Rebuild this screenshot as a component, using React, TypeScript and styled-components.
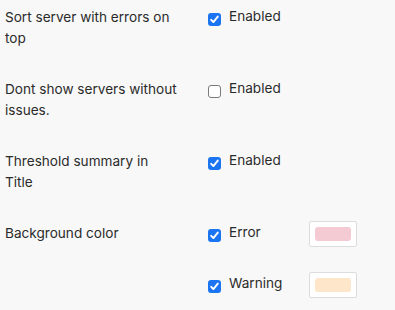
import React from 'react'
import styled, { createGlobalStyle } from 'styled-components'

const GlobalStyle = createGlobalStyle`
  html, body {
    margin: 0;
    padding: 0;
    background: #f8f8f8;
  }
  body {
    font-family: Inter, "Liberation Sans", sans-serif;
    font-size: 13.6px;
    color: #2b2b2b;
  }
`

interface Option {
  label: string
  checked: boolean
  color?: string
}

interface Setting {
  title: string
  options: Option[]
}

const settings: Setting[] = [
  { title: 'Sort server with errors on top', options: [{ label: 'Enabled', checked: true }] },
  { title: 'Dont show servers without issues.', options: [{ label: 'Enabled', checked: false }] },
  { title: 'Threshold summary in Title', options: [{ label: 'Enabled', checked: true }] },
  {
    title: 'Background color',
    options: [
      { label: 'Error', checked: true, color: '#f5cbd3' },
      { label: 'Warning', checked: true, color: '#fde6c9' },
    ],
  },
]

const Check: React.FunctionComponent<{ checked: boolean; onToggle: () => void }> = ({ checked, onToggle }) => (
  <CheckBox $checked={checked} onClick={onToggle} role="checkbox" aria-checked={checked}>
    {checked && (
      <svg width="11" height="11" viewBox="0 0 11 11">
        <path d="M2.2 5.8 L4.4 8.1 L8.8 2.6" fill="none" stroke="#fff" strokeWidth="1.9" strokeLinecap="round" strokeLinejoin="round" />
      </svg>
    )}
  </CheckBox>
)

const App: React.FunctionComponent = () => {
  const [state, setState] = React.useState(settings)

  const toggle = (i: number, j: number) => {
    setState(prev =>
      prev.map((s, si) =>
        si !== i ? s : { ...s, options: s.options.map((o, oj) => (oj !== j ? o : { ...o, checked: !o.checked })) }
      )
    )
  }

  return (
    <>
      <GlobalStyle />
      <Page>
        {state.map((setting, i) => (
          <Row key={setting.title}>
            <Label>{setting.title}</Label>
            <Options>
              {setting.options.map((option, j) => (
                <OptionRow key={option.label}>
                  <Check checked={option.checked} onToggle={() => toggle(i, j)} />
                  <OptionText $wide={!!option.color}>{option.label}</OptionText>
                  {option.color && (
                    <Swatch>
                      <SwatchFill $color={option.color} />
                    </Swatch>
                  )}
                </OptionRow>
              ))}
            </Options>
          </Row>
        ))}
      </Page>
    </>
  )
}

export default App

const Page = styled.div`
  display: flex;
  flex-direction: column;
  gap: 30px;
  padding: 7px 0 0 5px;
`

const Row = styled.div`
  display: grid;
  grid-template-columns: 203px 1fr;
  align-items: start;
`

const Label = styled.div`
  width: 174px;
  line-height: 21px;
`

const Options = styled.div`
  display: flex;
  flex-direction: column;
  gap: 27px;
`

const OptionRow = styled.div`
  display: flex;
  align-items: flex-start;
`

const CheckBox = styled.span<{ $checked: boolean }>`
  box-sizing: border-box;
  width: 13px;
  height: 13px;
  margin-top: 6px;
  margin-right: 8px;
  border-radius: 3px;
  display: flex;
  align-items: center;
  justify-content: center;
  cursor: pointer;
  background: ${p => (p.$checked ? '#1b74f1' : '#fff')};
  border: ${p => (p.$checked ? 'none' : '1px solid #7a7a7a')};
`

const OptionText = styled.span<{ $wide: boolean }>`
  line-height: 21px;
  margin-top: -1px;
  width: ${p => (p.$wide ? '80px' : 'auto')};
`

const Swatch = styled.div`
  box-sizing: border-box;
  width: 48px;
  height: 26px;
  padding: 5px;
  background: #fff;
  border: 1px solid #dcdcdc;
  border-radius: 2px;
  margin-top: -2px;
`

const SwatchFill = styled.div<{ $color: string }>`
  width: 100%;
  height: 100%;
  border-radius: 3px;
  background: ${p => p.$color};
`
